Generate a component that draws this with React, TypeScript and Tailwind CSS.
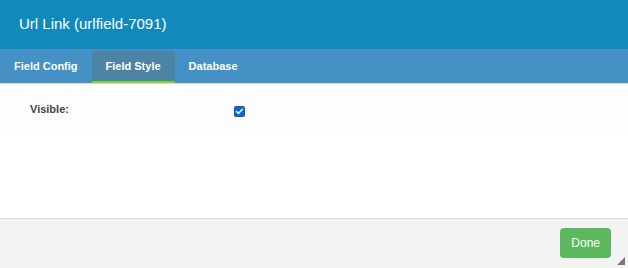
import { Check } from "lucide-react";

const tabs = ["Field Config", "Field Style", "Database"];

export default function App() {
  return (
    <div className="flex h-[268px] w-[628px] flex-col bg-white font-['Liberation_Sans',Arial,sans-serif]">
      <div className="flex h-[49px] items-center bg-[#1289bd] px-[19px] text-[15px] text-white">
        Url Link (urlfield-7091)
      </div>
      <div className="flex h-[35px] items-end border-b border-[#dcdcdc] bg-[#4590c4]">
        {tabs.map((t) =>
          t === "Field Style" ? (
            <div
              key={t}
              className="flex h-[32px] items-center rounded-t-[3px] border-b-2 border-[#7ed321] bg-[#4d84a3] px-[14px] text-[11px] font-bold text-white"
            >
              {t}
            </div>
          ) : (
            <div key={t} className="flex h-[32px] items-center px-[14px] pb-[2px] text-[11px] font-bold text-white">
              {t}
            </div>
          )
        )}
      </div>
      <div className="flex-1">
        <div className="flex h-[51px] items-center bg-[#fdfdfd] pl-[30px]">
          <div className="w-[204px] text-[11px] font-bold text-[#444]">Visible:</div>
          <div className="mt-[4px] flex h-[11px] w-[11px] items-center justify-center rounded-[2px] bg-[#0f62c9]">
            <Check className="h-[9px] w-[9px] text-white" strokeWidth={4} />
          </div>
        </div>
      </div>
      <div className="relative flex h-[50px] items-center justify-end border-t border-[#dcdcdc] bg-[#f3f3f3] pr-[17px]">
        <button className="mt-[-2px] h-[30px] rounded-[4px] bg-[#5cb85c] px-[11px] text-[12px] text-white">
          Done
        </button>
        <svg className="absolute bottom-[3px] right-[3px]" width="8" height="8" viewBox="0 0 8 8">
          <path d="M8 0 L8 8 L0 8 Z" fill="#777" />
        </svg>
      </div>
    </div>
  );
}
